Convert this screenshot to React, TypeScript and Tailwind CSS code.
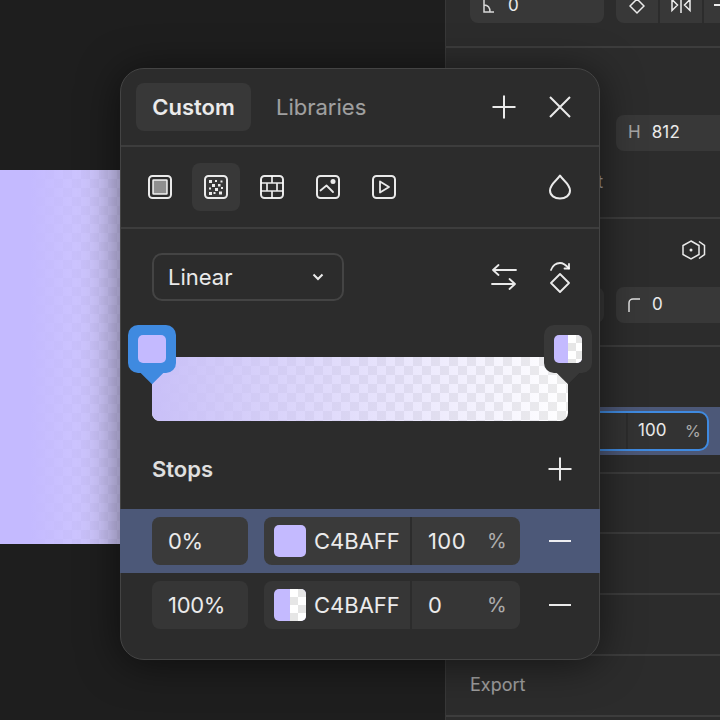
import type { ReactNode } from "react";

const Icon = ({ children, size = 24 }: { children: ReactNode; size?: number }) => (
  <svg
    width={size}
    height={size}
    viewBox="0 0 24 24"
    fill="none"
    stroke="currentColor"
    strokeWidth={2}
    strokeLinecap="round"
    strokeLinejoin="round"
    className="shrink-0 overflow-visible text-white/90"
  >
    {children}
  </svg>
);

const Plus = () => (
  <Icon>
    <path d="M12 0.5V23.5M0.5 12H23.5" strokeLinecap="butt" />
  </Icon>
);

const Minus = () => (
  <Icon>
    <path d="M1 12H23" strokeLinecap="butt" />
  </Icon>
);

const Checker = "bg-[conic-gradient(#e6e6e6_25%,#ffffff_0_50%,#e6e6e6_0_75%,#ffffff_0)]";
const SoftChecker = "bg-[conic-gradient(#ececec_25%,#ffffff_0_50%,#ececec_0_75%,#ffffff_0)]";

const Swatch = ({ half, size }: { half?: boolean; size: "sm" | "lg" }) => (
  <div className={`flex shrink-0 overflow-hidden rounded-[5px] bg-[#c4baff] ${size === "lg" ? "h-8 w-8" : "h-7 w-7"}`}>
    {half && <div className="w-1/2" />}
    {half && <div className={`w-1/2 bg-[length:16px_16px] ${Checker}`} />}
  </div>
);

const Marker = ({ active, half, className }: { active?: boolean; half?: boolean; className: string }) => {
  const tone = active ? "bg-[#3f8ae0]" : "bg-[#383838]";
  return (
    <div className={`absolute top-[-32px] h-12 w-12 ${className}`}>
      <div className={`absolute left-4 top-10 h-4 w-4 rotate-45 ${tone}`} />
      <div className={`relative flex h-12 w-12 items-center justify-center rounded-[10px] ${tone}`}>
        <Swatch size="sm" half={half} />
      </div>
    </div>
  );
};

const StopRow = ({ pos, half, alpha, active }: { pos: string; half?: boolean; alpha: string; active?: boolean }) => {
  const field = active ? "bg-[#3a3a3a]" : "bg-[#363636]";
  return (
    <div className={`-mx-px flex h-16 items-center pl-[32px] ${active ? "bg-[#4c5878]" : ""}`}>
      <div className={`flex h-12 w-24 items-center rounded-lg pl-4 tracking-[-0.3px] ${field}`}>{pos}</div>
      <div className={`ml-4 flex h-12 w-64 items-center rounded-lg pl-2.5 ${field}`}>
        <Swatch size="lg" half={half} />
        <span className="ml-2 w-[96px]">C4BAFF</span>
        <div className="h-12 w-0.5 bg-[#2c2c2c]" />
        <span className="ml-4 w-[59px] tracking-[0.4px]">{alpha}</span>
        <span className="text-[20px] text-white/60">%</span>
      </div>
      <div className="ml-7">
        <Minus />
      </div>
    </div>
  );
};

const Popup = () => (
  <div className="absolute left-[120px] top-[68px] h-[592px] w-[480px] rounded-[24px] border border-[#444444] bg-[#2c2c2c] text-[22px] leading-none text-white/90 shadow-[0_4px_40px_rgba(0,0,0,0.55)]">
    <div className="flex h-[78px] items-center border-b-2 border-[#3d3d3d] pl-[15px]">
      <div className="flex h-12 w-[115px] items-center justify-center rounded-lg bg-[#383838] font-semibold">
        Custom
      </div>
      <div className="ml-[25px] text-white/55">Libraries</div>
      <div className="ml-auto flex items-center gap-8 pr-[27px]">
        <Plus />
        <Icon>
          <path d="M2 2L22 22M22 2L2 22" strokeLinecap="butt" />
        </Icon>
      </div>
    </div>

    <div className="flex h-[82px] items-center gap-8 border-b-2 border-[#3d3d3d] pl-[27px] pr-[27px]">
      <Icon>
        <rect x="1" y="1" width="22" height="22" rx="3.5" />
        <rect x="5" y="5" width="14" height="14" rx="0.5" fill="#8f8f8f" strokeWidth={1.5} />
      </Icon>
      <div className="mx-[-12px] flex h-12 w-12 items-center justify-center rounded-lg bg-[#383838]">
        <Icon>
          <rect x="1" y="1" width="22" height="22" rx="3.5" />
          <g fill="currentColor" stroke="none">
            <rect x="5" y="5" width="3" height="3" />
            <rect x="11" y="5" width="2" height="2" />
            <rect x="16.5" y="5.5" width="2" height="2" />
            <rect x="8" y="9" width="3" height="3" />
            <rect x="14" y="9" width="2.5" height="2.5" />
            <rect x="5" y="12.5" width="2" height="2" />
            <rect x="11" y="13" width="3" height="3" />
            <rect x="17" y="12" width="2" height="2" />
            <rect x="5" y="17" width="3" height="3" />
            <rect x="9.5" y="17" width="2" height="2" />
            <rect x="15" y="16.5" width="3" height="3" />
          </g>
        </Icon>
      </div>
      <Icon>
        <rect x="1" y="1" width="22" height="22" rx="3.5" />
        <path d="M1 8H23M1 16H23M12 1V8M7 8V16M17 8V16M12 16V23" strokeWidth={1.7} strokeLinecap="butt" />
      </Icon>
      <Icon>
        <rect x="1" y="1" width="22" height="22" rx="3.5" />
        <path d="M4.5 15.5L10.5 10.5L17 17" strokeWidth={1.8} />
        <circle cx="17" cy="6.5" r="2.5" fill="currentColor" stroke="none" />
      </Icon>
      <Icon>
        <rect x="1" y="1" width="22" height="22" rx="3.5" />
        <path d="M8 6.5L17 12L8 17.5Z" strokeWidth={1.8} />
      </Icon>
      <div className="ml-auto">
        <Icon>
          <path d="M12 0.5C14.5 5 22 9 22 15.5C22 20.5 17.5 23.5 12 23.5C6.5 23.5 2 20.5 2 15.5C2 9 9.5 5 12 0.5Z" />
        </Icon>
      </div>
    </div>

    <div className="mt-6 flex items-center pl-[31px] pr-[27px]">
      <div className="flex h-12 w-48 items-center rounded-[10px] border-2 border-[#444444] pl-3.5 pr-[18px]">
        <span>Linear</span>
        <svg width="12" height="8" viewBox="0 0 12 8" fill="none" stroke="currentColor" strokeWidth="2" className="ml-auto">
          <path d="M1.5 1.5L6 6L10.5 1.5" />
        </svg>
      </div>
      <div className="ml-auto flex items-center gap-8">
        <Icon>
          <path d="M24 5H1.5M6.5 0L1 5L6.5 10" strokeWidth={1.8} />
          <path d="M0 19H22.5M17.5 14L23 19L17.5 24" strokeWidth={1.8} />
        </Icon>
        <svg width="24" height="32" viewBox="0 0 24 32" fill="none" stroke="currentColor" strokeWidth="1.8" strokeLinecap="round" strokeLinejoin="round" className="my-[-4px] shrink-0 text-white/90">
          <path d="M3 9C5 4 8.5 2 12 2C15 2 18 4 21 7.5" />
          <path d="M21 3V7.5H16.5" />
          <path d="M12 13L21 22L12 31L3 22Z" />
        </svg>
      </div>
    </div>

    <div className={`relative ml-[31px] mt-14 h-16 w-[416px] rounded-b-lg bg-[length:18px_18px] ${SoftChecker}`}>
      <div className="h-full w-full rounded-b-lg bg-gradient-to-r from-[#c9c0f8] to-[#c4baff00]" />
      <Marker active className="left-[-24px]" />
      <Marker half className="right-[-24px]" />
    </div>

    <div className="mt-6 flex h-12 items-center justify-between pl-[31px] pr-[27px]">
      <span className="font-semibold text-white/85">Stops</span>
      <Plus />
    </div>

    <div className="mt-4">
      <StopRow active pos="0%" alpha="100" />
      <StopRow half pos="100%" alpha="0" />
    </div>
  </div>
);

const Field = ({ children, className }: { children?: ReactNode; className: string }) => (
  <div className={`flex h-9 items-center rounded-lg bg-[#383838] text-[17px] text-white/90 ${className}`}>{children}</div>
);

const Panel = () => (
  <div className="flex h-full w-[275px] shrink-0 flex-col border-l border-[#383838] bg-[#2c2c2c]">
    <div className="flex h-12 shrink-0 items-end gap-3 overflow-hidden border-b-2 border-[#3d3d3d] pb-[23px] pl-6">
      <Field className="w-[134px] shrink-0 pl-[13px]">
        <svg width="12" height="16" viewBox="0 0 12 16" fill="none" stroke="currentColor" strokeWidth="1.5" className="text-white/80">
          <path d="M1 0V15H11M1 8C4.5 8 7 10 7 15" />
        </svg>
        <span className="ml-[13px] leading-none">0</span>
      </Field>
      <Field className="w-[120px] shrink-0 gap-0">
        <div className="flex h-9 w-[44px] items-center justify-center border-r-2 border-[#2c2c2c]">
          <svg width="16" height="32" viewBox="0 0 16 32" fill="none" stroke="currentColor" strokeWidth="1.5">
            <path d="M8 10L15 17L8 24L1 17Z" />
            <path d="M2 9C5 5 11 5 14 9" />
          </svg>
        </div>
        <div className="flex h-9 w-[44px] items-center justify-center border-r-2 border-[#2c2c2c]">
          <svg width="20" height="18" viewBox="0 0 20 18" fill="none" stroke="currentColor" strokeWidth="1.5">
            <path d="M10 1V17M1 3.5L6.5 9L1 14.5ZM19 3.5L13.5 9L19 14.5Z" />
          </svg>
        </div>
        <div className="ml-[10px] h-0.5 w-4 bg-white/90" />
      </Field>
    </div>

    <div className="flex h-[171px] shrink-0 flex-col border-b-2 border-[#3d3d3d] pt-[67px]">
      <Field className="ml-[170px] w-[130px] shrink-0 pl-3">
        <span className="text-white/55">H</span>
        <span className="ml-[11px] tracking-[0.2px]">812</span>
      </Field>
      <div className="mt-[19px] w-[157px] text-right text-[17px] leading-6 text-white/55">Clip content</div>
    </div>

    <div className="flex h-[128px] shrink-0 flex-col border-b-2 border-[#3d3d3d] pt-[19px]">
      <div className="ml-[235px] flex h-6 items-center">
        <svg width="26" height="24" viewBox="0 0 26 24" fill="none" stroke="currentColor" strokeWidth="1.5" className="text-white/90">
          <path d="M10 3L18 7.5V16.5L10 21L2 16.5V7.5Z" />
          <circle cx="10" cy="12" r="1.5" fill="currentColor" stroke="none" />
          <path d="M18 3.5L23.5 7.5V16.5L18 20.5" />
        </svg>
      </div>
      <div className="mt-[25px] flex gap-3">
        <Field className="w-[158px] shrink-0" />
        <Field className="w-[130px] shrink-0 pl-3">
          <svg width="12" height="14" viewBox="0 0 12 14" fill="none" stroke="currentColor" strokeWidth="1.5" className="text-white/85">
            <path d="M1 14V5C1 2.5 3 1 5 1H12" />
          </svg>
          <span className="ml-3">0</span>
        </Field>
      </div>
    </div>

    <div className="flex h-[127px] shrink-0 flex-col border-b-2 border-[#3d3d3d] pt-[60px]">
      <div className="flex h-12 items-center bg-[#4c5878] pl-[100px]">
        <div className="flex h-10 w-[163px] items-center rounded-[10px] border-2 border-[#3f8ae0] bg-[#333333] text-[17px] text-white/90">
          <div className="h-full w-[80px] border-r-2 border-[#2c2c2c]" />
          <span className="ml-[10px] w-[47px]">100</span>
          <span className="text-[16px] text-white/60">%</span>
        </div>
      </div>
    </div>

    <div className="h-[60px] shrink-0 border-b-2 border-[#3d3d3d]" />
    <div className="h-[61px] shrink-0 border-b-2 border-[#3d3d3d]" />
    <div className="h-[61px] shrink-0 border-b-2 border-[#3d3d3d]" />
    <div className="flex h-[61px] shrink-0 items-center border-b-2 border-[#3d3d3d] pb-0.5 pl-6 text-[18px] text-white/55">
      Export
    </div>
  </div>
);

export default function App() {
  return (
    <div className="relative flex h-[720px] w-[720px] overflow-hidden bg-[#1e1e1e] font-[Inter,sans-serif]">
      <div className="w-[445px] shrink-0 pt-[170px]">
        <div className={`h-[374px] w-[300px] bg-[length:18px_18px] ${Checker}`}>
          <div className="h-full w-full bg-[linear-gradient(to_right,#c4baff_10%,#c4baffb8_40%,#c4baff00)]" />
        </div>
      </div>
      <Panel />
      <Popup />
    </div>
  );
}
